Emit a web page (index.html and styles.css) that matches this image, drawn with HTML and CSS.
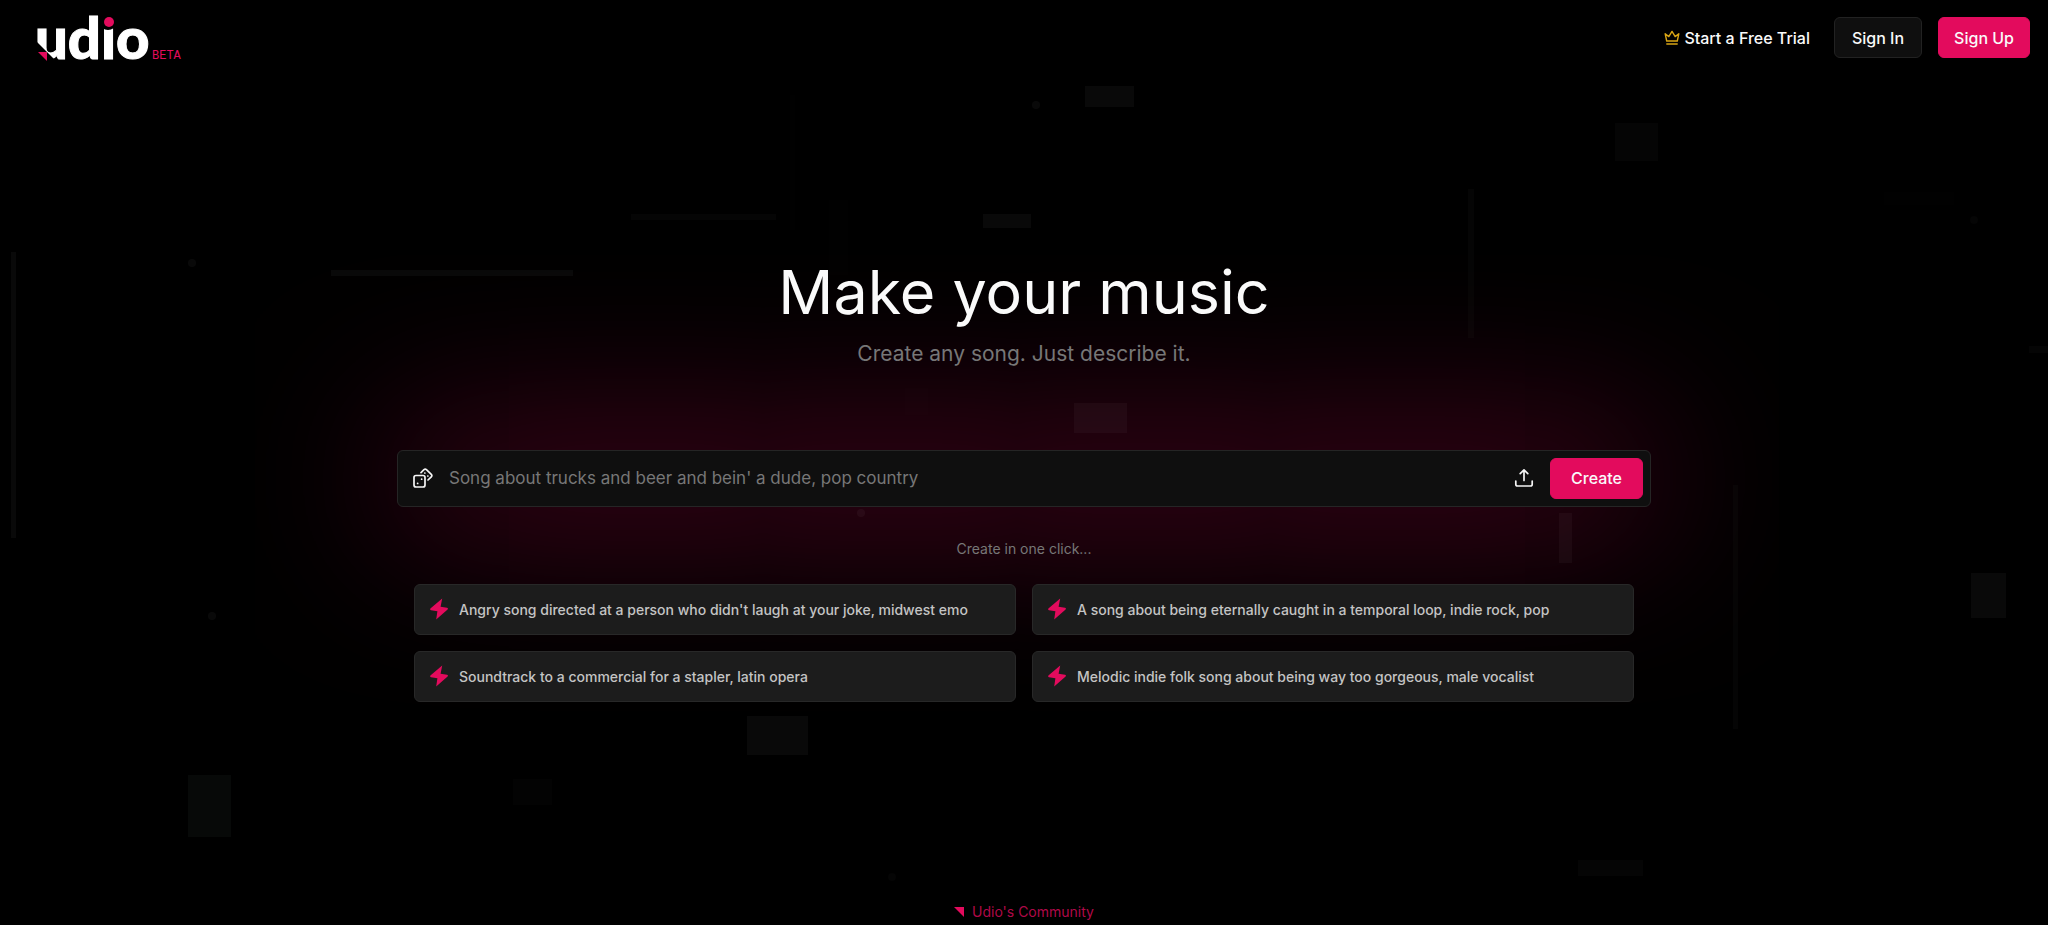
FILE: index.html
```
<!DOCTYPE html>
<html lang="en">
<head>
    <meta charset="UTF-8">
    <meta name="viewport" content="width=device-width, initial-scale=1.0">
    <title>Udio | Make your music</title>
    <link rel="stylesheet" href="styles.css">
</head>
<body>
    <!-- faint floating shapes -->
    <svg class="backdrop" viewBox="0 0 2048 925" preserveAspectRatio="xMidYMid slice" fill="#fff" aria-hidden="true">
        <g opacity="0.035">
            <rect x="11" y="252" width="5" height="286"/>
            <rect x="331" y="270" width="242" height="6"/>
            <rect x="983" y="214" width="48" height="14"/>
            <rect x="1085" y="86" width="49" height="21"/>
            <rect x="747" y="716" width="61" height="39"/>
            <rect x="1971" y="573" width="35" height="45"/>
            <rect x="1559" y="513" width="13" height="50"/>
            <rect x="1074" y="403" width="53" height="30"/>
            <circle cx="192" cy="263" r="4"/>
            <circle cx="212" cy="616" r="4"/>
            <circle cx="861" cy="513" r="4"/>
            <circle cx="1036" cy="105" r="4"/>
        </g>
        <rect x="188" y="775" width="43" height="62" fill="#cfe" opacity="0.035"/>
        <g opacity="0.02">
            <rect x="631" y="214" width="145" height="6"/>
            <rect x="1615" y="123" width="43" height="38"/>
            <rect x="1468" y="189" width="6" height="149"/>
            <rect x="1733" y="485" width="5" height="244"/>
            <rect x="1578" y="860" width="65" height="16"/>
            <rect x="2029" y="346" width="19" height="7"/>
            <circle cx="892" cy="877" r="4"/>
            <circle cx="1974" cy="220" r="4"/>
        </g>
        <rect x="513" y="779" width="39" height="26" opacity="0.01"/>
        <g opacity="0.005">
            <rect x="790" y="95" width="5" height="135"/>
            <rect x="829" y="200" width="19" height="75"/>
            <rect x="905" y="388" width="23" height="27"/>
            <rect x="1884" y="192" width="70" height="13"/>
        </g>
    </svg>

    <header class="header">
        <a href="#" class="logo" aria-label="Udio beta">
            <svg class="logo-mark" width="114" height="50" viewBox="0 0 114 50">
                <text class="logo-text" x="-3" y="46">udio</text>
                <path d="M-3 27L19 49H-3Z" fill="#000"/>
                <path d="M0 39H9V48Z" fill="#e30b5d"/>
                <circle cx="70" cy="9" r="8" fill="#000"/>
                <circle cx="71" cy="9" r="5" fill="#e30b5d"/>
            </svg>
            <span class="beta">BETA</span>
        </a>
        <nav class="nav">
            <a href="#" class="trial-link">
                <svg width="16" height="16" viewBox="0 0 16 16" fill="none" stroke="#d9a514" stroke-width="1.4" stroke-linejoin="round" stroke-linecap="round">
                    <path d="M2.7 11L1.2 3.8L4.8 6.6L8 1.4L11.2 6.6L14.8 3.8L13.3 11Z"/>
                    <path d="M2.8 14H13.2"/>
                </svg>
                Start a Free Trial
            </a>
            <button class="button sign-in-button">Sign In</button>
            <button class="button sign-up-button">Sign Up</button>
        </nav>
    </header>

    <main class="hero">
        <h1 class="title">Make your music</h1>
        <p class="subtitle">Create any song. Just describe it.</p>

        <form class="prompt-bar">
            <button type="button" class="icon-button" aria-label="Random prompt">
                <svg width="20" height="20" viewBox="0 0 20 20" fill="none" stroke="#f5f5f5" stroke-width="1.7" stroke-linejoin="round" stroke-linecap="round">
                    <rect x="1" y="7.5" width="11" height="11.5" rx="2"/>
                    <path d="M8 4.6L11 1.7Q12.2 .6 13.4 1.7L18.3 6.4Q19.5 7.6 18.3 8.8L15 12"/>
                    <path d="M4.6 15.4h.1M8.6 11.2h.1M11.8 5h.1M14.8 8h.1"/>
                </svg>
            </button>
            <input type="text" class="prompt-input" aria-label="Describe your song" placeholder="Song about trucks and beer and bein' a dude, pop country">
            <button type="button" class="icon-button" aria-label="Upload audio">
                <svg width="20" height="20" viewBox="0 0 20 20" fill="none" stroke="#f5f5f5" stroke-width="1.7" stroke-linejoin="round" stroke-linecap="round">
                    <path d="M10 12.5V2M6.2 5.6L10 1.8L13.8 5.6"/>
                    <path d="M1.8 13V16.2Q1.8 18 3.6 18H16.4Q18.2 18 18.2 16.2V13"/>
                </svg>
            </button>
            <button type="button" class="button create-button">Create</button>
        </form>

        <p class="hint">Create in one click...</p>

        <div class="suggestions">
            <button class="suggestion">
                <svg class="bolt" viewBox="0 0 18 22"><path d="M12.2 .5L.4 10.6Q-.2 12 1 12.2L7.4 13.2L6.2 21.5L17.6 11.4Q18.4 10 17 9.8L10.6 8.8Z"/></svg>
                Angry song directed at a person who didn't laugh at your joke, midwest emo
            </button>
            <button class="suggestion">
                <svg class="bolt" viewBox="0 0 18 22"><path d="M12.2 .5L.4 10.6Q-.2 12 1 12.2L7.4 13.2L6.2 21.5L17.6 11.4Q18.4 10 17 9.8L10.6 8.8Z"/></svg>
                A song about being eternally caught in a temporal loop, indie rock, pop
            </button>
            <button class="suggestion">
                <svg class="bolt" viewBox="0 0 18 22"><path d="M12.2 .5L.4 10.6Q-.2 12 1 12.2L7.4 13.2L6.2 21.5L17.6 11.4Q18.4 10 17 9.8L10.6 8.8Z"/></svg>
                Soundtrack to a commercial for a stapler, latin opera
            </button>
            <button class="suggestion">
                <svg class="bolt" viewBox="0 0 18 22"><path d="M12.2 .5L.4 10.6Q-.2 12 1 12.2L7.4 13.2L6.2 21.5L17.6 11.4Q18.4 10 17 9.8L10.6 8.8Z"/></svg>
                Melodic indie folk song about being way too gorgeous, male vocalist
            </button>
        </div>
    </main>

    <a href="#" class="community">
        <svg width="10" height="10" viewBox="0 0 10 10"><path d="M0 0H10V10Z" fill="#e30b5d"/></svg>
        Udio's Community
    </a>
</body>
</html>
```
FILE: styles.css
```
* {
    box-sizing: border-box;
}

body {
    font-family: Inter, sans-serif;
    margin: 0;
    display: flex;
    flex-direction: column;
    min-height: 100vh;
    background-color: #000;
    color: #fafafa;
    position: relative;
}

button,
input {
    font-family: inherit;
}

.backdrop {
    position: absolute;
    top: 0;
    left: 0;
    width: 100%;
    height: 100%;
    z-index: 1;
    pointer-events: none;
}

.header {
    display: flex;
    justify-content: space-between;
    align-items: center;
    height: 75px;
    padding: 0 18px 0 38px;
}

.logo {
    display: flex;
    align-items: flex-end;
    text-decoration: none;
}

.logo-mark {
    overflow: visible;
}

.logo-text {
    font-family: Lato, sans-serif;
    font-size: 58px;
    font-weight: 900;
    fill: #fff;
    stroke: #fff;
    stroke-width: 1px;
}

.beta {
    font-family: "Liberation Mono", monospace;
    font-size: 12px;
    line-height: 14px;
    color: #e30b5d;
}

.nav {
    display: flex;
    align-items: center;
}

.trial-link {
    display: flex;
    align-items: center;
    gap: 4px;
    margin-right: 24px;
    font-size: 16px;
    font-weight: 500;
    color: #fafafa;
    text-decoration: none;
}

.button {
    height: 41px;
    padding: 0 15px;
    border: 1px solid #e30b5d;
    border-radius: 6px;
    background-color: #e30b5d;
    color: #fafafa;
    font-size: 16px;
    font-weight: 500;
    cursor: pointer;
}

.sign-in-button {
    margin-right: 16px;
    padding: 0 17px;
    background-color: #0f0f0f;
    border-color: #222;
}

.hero {
    flex: 1;
    display: flex;
    flex-direction: column;
    justify-content: center;
    align-items: center;
    width: 100%;
    max-width: 1254px;
    margin: 0 auto;
    padding-bottom: 16px;
}

.title {
    margin: 0;
    font-size: 61px;
    font-weight: 400;
    line-height: 64px;
    position: relative;
    z-index: 2;
}

.subtitle {
    margin: 16px 0 82px;
    font-size: 21px;
    line-height: 28px;
    color: #777;
    position: relative;
    z-index: 2;
}

.prompt-bar {
    display: flex;
    align-items: center;
    width: 100%;
    padding: 7px;
    border: 1px solid #252525;
    border-radius: 6px;
    background-color: #0f0f0f;
    box-shadow: 0 0 170px rgba(227, 11, 93, 0.6); /* pink glow */
}

.icon-button {
    display: flex;
    padding: 8px;
    border: none;
    background: none;
    cursor: pointer;
}

.prompt-input {
    flex: 1;
    min-width: 0;
    padding: 0 8px;
    border: none;
    outline: none;
    background: none;
    color: #fafafa;
    font-size: 17px;
}

.prompt-input::placeholder {
    color: #777;
}

.create-button {
    margin-left: 8px;
    padding: 0 20px;
}

.hint {
    margin: 32px 0 25px;
    font-size: 14px;
    line-height: 20px;
    color: #777;
}

.suggestions {
    display: grid;
    grid-template-columns: 1fr 1fr;
    gap: 16px;
    width: 100%;
    padding: 0 17px;
}

.suggestion {
    display: flex;
    align-items: center;
    gap: 11px;
    height: 51px;
    padding: 0 15px;
    border: 1px solid #282828;
    border-radius: 6px;
    background-color: #1c1c1c;
    color: #c4c4c4;
    font-size: 14px;
    font-weight: 500;
    text-align: left;
    cursor: pointer;
    position: relative;
    z-index: 2;
}

.bolt {
    width: 18px;
    height: 22px;
    flex: none;
    fill: #e30b5d;
}

.community {
    display: flex;
    justify-content: center;
    align-items: center;
    gap: 8px;
    padding-bottom: 3px;
    color: #b00948;
    font-size: 14px;
    line-height: 20px;
    text-decoration: none;
}
```
